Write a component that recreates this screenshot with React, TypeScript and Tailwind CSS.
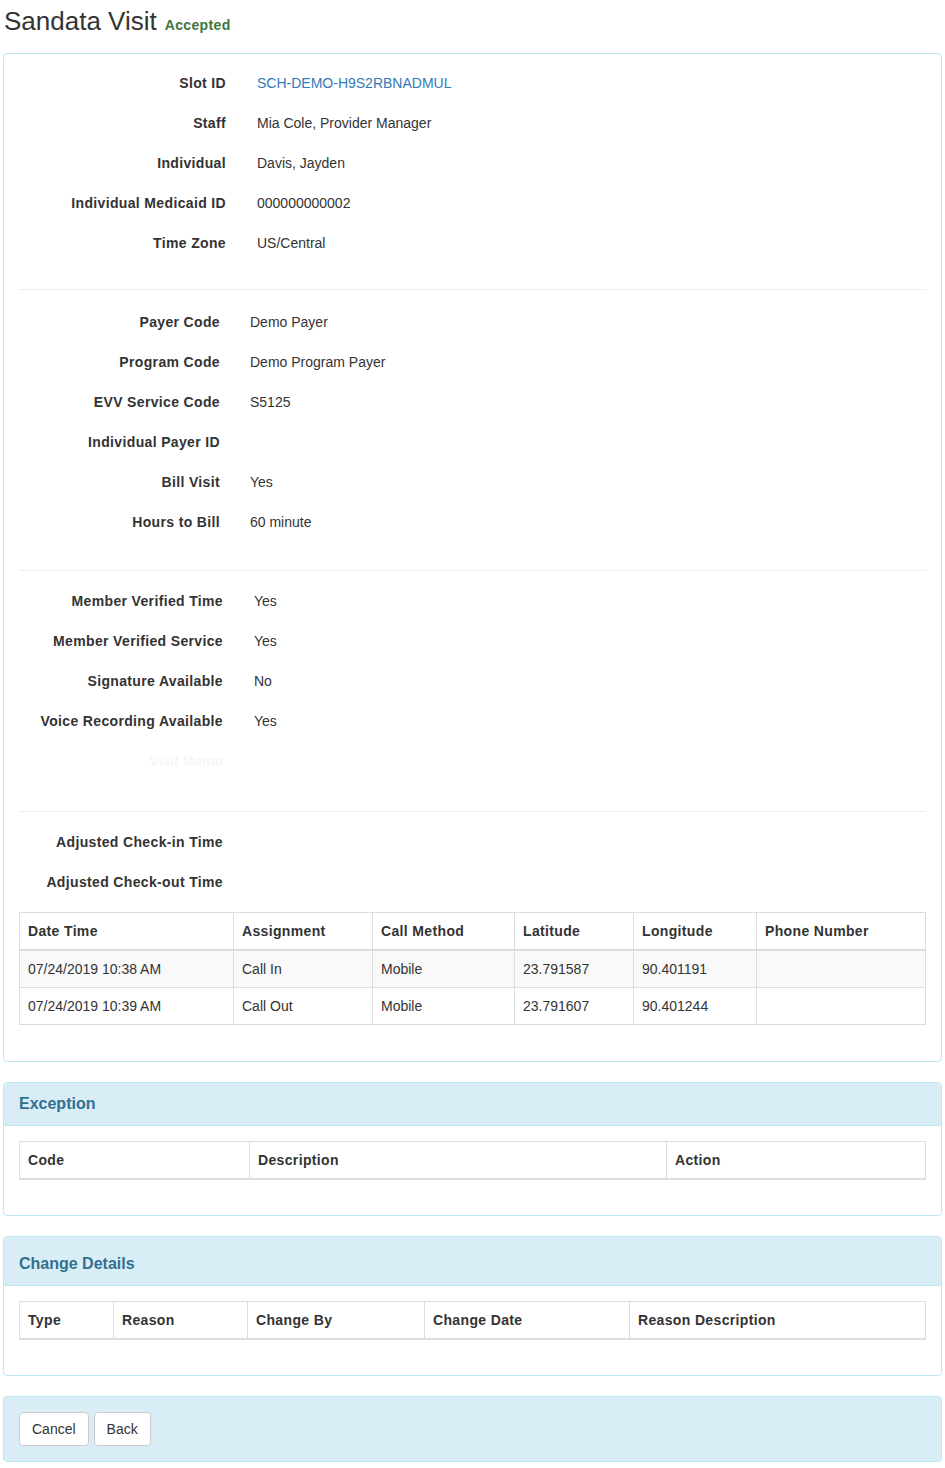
import React from 'react';

type Row = { label: string; value?: string; link?: boolean };

const visitInfo: Row[] = [
  { label: 'Slot ID', value: 'SCH-DEMO-H9S2RBNADMUL', link: true },
  { label: 'Staff', value: 'Mia Cole, Provider Manager' },
  { label: 'Individual', value: 'Davis, Jayden' },
  { label: 'Individual Medicaid ID', value: '000000000002' },
  { label: 'Time Zone', value: 'US/Central' },
];

const payerInfo: Row[] = [
  { label: 'Payer Code', value: 'Demo Payer' },
  { label: 'Program Code', value: 'Demo Program Payer' },
  { label: 'EVV Service Code', value: 'S5125' },
  { label: 'Individual Payer ID' },
  { label: 'Bill Visit', value: 'Yes' },
  { label: 'Hours to Bill', value: '60 minute' },
];

const verifyInfo: Row[] = [
  { label: 'Member Verified Time', value: 'Yes' },
  { label: 'Member Verified Service', value: 'Yes' },
  { label: 'Signature Available', value: 'No' },
  { label: 'Voice Recording Available', value: 'Yes' },
];

const adjustInfo: Row[] = [
  { label: 'Adjusted Check-in Time' },
  { label: 'Adjusted Check-out Time' },
];

const callCols = [
  { name: 'Date Time', w: 'w-[214px]' },
  { name: 'Assignment', w: 'w-[139px]' },
  { name: 'Call Method', w: 'w-[142px]' },
  { name: 'Latitude', w: 'w-[119px]' },
  { name: 'Longitude', w: 'w-[123px]' },
  { name: 'Phone Number', w: '' },
];

const calls = [
  ['07/24/2019 10:38 AM', 'Call In', 'Mobile', '23.791587', '90.401191', ''],
  ['07/24/2019 10:39 AM', 'Call Out', 'Mobile', '23.791607', '90.401244', ''],
];

const exceptionCols = [
  { name: 'Code', w: 'w-[230px]' },
  { name: 'Description', w: 'w-[417px]' },
  { name: 'Action', w: '' },
];

const changeCols = [
  { name: 'Type', w: 'w-[94px]' },
  { name: 'Reason', w: 'w-[134px]' },
  { name: 'Change By', w: 'w-[177px]' },
  { name: 'Change Date', w: 'w-[205px]' },
  { name: 'Reason Description', w: '' },
];

function FieldList({ rows, labelW, gap }: { rows: Row[]; labelW: string; gap: string }) {
  return (
    <div>
      {rows.map((r) => (
        <div key={r.label} className="flex h-10 items-center">
          <span className={`${labelW} shrink-0 text-right font-bold tracking-[0.35px]`}>{r.label}</span>
          {r.value && (
            <span className={`${gap} ${r.link ? 'text-[#337ab7]' : ''}`}>{r.value}</span>
          )}
        </div>
      ))}
    </div>
  );
}

function Divider({ space }: { space: string }) {
  return <div className={`${space} border-t border-[#eeeeee]`} />;
}

function DataTable({ cols, rows }: { cols: { name: string; w: string }[]; rows: string[][] }) {
  return (
    <table className="mb-5 w-full table-fixed border-collapse border border-[#dddddd]">
      <thead>
        <tr>
          {cols.map((c) => (
            <th
              key={c.name}
              className={`${c.w} border border-b-2 border-[#dddddd] px-2 py-2 text-left font-bold leading-5 tracking-[0.35px]`}
            >
              {c.name}
            </th>
          ))}
        </tr>
      </thead>
      <tbody>
        {rows.map((row, i) => (
          <tr key={i} className={i % 2 === 0 ? 'bg-[#f9f9f9]' : ''}>
            {row.map((cell, j) => (
              <td key={j} className="border border-[#dddddd] px-2 py-2 leading-5">
                {cell}
              </td>
            ))}
          </tr>
        ))}
      </tbody>
    </table>
  );
}

function InfoPanel({ title, pad, children }: { title: string; pad: string; children: React.ReactNode }) {
  return (
    <div className="mb-5 rounded border border-[#bce8f1]">
      <div className={`rounded-t border-b border-[#bce8f1] bg-[#d9edf7] px-[15px] ${pad} text-[16px] font-bold leading-[22px] text-[#31708f]`}>
        {title}
      </div>
      <div className="p-[15px]">{children}</div>
    </div>
  );
}

export default function App() {
  return (
    <div className="min-h-[1468px] bg-white px-[3px] font-['Liberation_Sans',Helvetica,Arial,sans-serif] text-sm text-[#333333]">
      <div className="flex h-[53px] items-baseline gap-[8px] pl-[1px] pt-[6px]">
        <h1 className="text-[26px] font-normal leading-[30px]">Sandata Visit</h1>
        <span className="text-sm font-bold tracking-[0.35px] text-[#3c763d]">Accepted</span>
      </div>

      <div className="mb-5 rounded border border-[#bce8f1] px-[15px] pb-[16px] pt-[9px]">
        <FieldList rows={visitInfo} labelW="w-[207px]" gap="ml-[31px]" />
        <Divider space="mt-[26px] mb-[12px]" />
        <FieldList rows={payerInfo} labelW="w-[201px]" gap="ml-[30px]" />
        <Divider space="mt-[28px] mb-[10px]" />
        <FieldList rows={verifyInfo} labelW="w-[204px]" gap="ml-[31px]" />
        <div className="flex h-10 items-center">
          <span className="w-[204px] text-right font-bold text-[#f6f6f6]">Visit Memo</span>
        </div>
        <Divider space="mt-[30px] mb-[10px]" />
        <FieldList rows={adjustInfo} labelW="w-[204px]" gap="ml-[31px]" />
        <div className="mt-[10px]">
          <DataTable cols={callCols} rows={calls} />
        </div>
      </div>

      <InfoPanel title="Exception" pad="py-[10px]">
        <DataTable cols={exceptionCols} rows={[]} />
      </InfoPanel>

      <InfoPanel title="Change Details" pad="pt-[16px] pb-[10px]">
        <DataTable cols={changeCols} rows={[]} />
      </InfoPanel>

      <div className="flex gap-[5px] rounded border border-[#bce8f1] bg-[#d9edf7] p-[15px]">
        <button className="rounded border border-[#cccccc] bg-white px-3 py-[6px] leading-5">Cancel</button>
        <button className="rounded border border-[#cccccc] bg-white px-3 py-[6px] leading-5">Back</button>
      </div>
    </div>
  );
}
